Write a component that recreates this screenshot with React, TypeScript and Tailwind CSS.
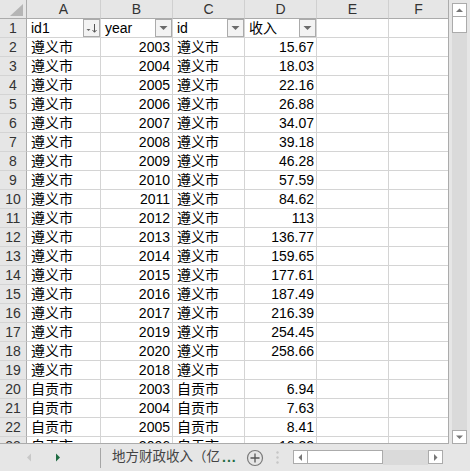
import React from "react";

const FONT = { fontFamily: '"Liberation Sans", "Noto Sans CJK SC", sans-serif' };

type Row = [string, string, string, string];

const ROWS: Row[] = [
  ["遵义市", "2003", "遵义市", "15.67"],
  ["遵义市", "2004", "遵义市", "18.03"],
  ["遵义市", "2005", "遵义市", "22.16"],
  ["遵义市", "2006", "遵义市", "26.88"],
  ["遵义市", "2007", "遵义市", "34.07"],
  ["遵义市", "2008", "遵义市", "39.18"],
  ["遵义市", "2009", "遵义市", "46.28"],
  ["遵义市", "2010", "遵义市", "57.59"],
  ["遵义市", "2011", "遵义市", "84.62"],
  ["遵义市", "2012", "遵义市", "113"],
  ["遵义市", "2013", "遵义市", "136.77"],
  ["遵义市", "2014", "遵义市", "159.65"],
  ["遵义市", "2015", "遵义市", "177.61"],
  ["遵义市", "2016", "遵义市", "187.49"],
  ["遵义市", "2017", "遵义市", "216.39"],
  ["遵义市", "2019", "遵义市", "254.45"],
  ["遵义市", "2020", "遵义市", "258.66"],
  ["遵义市", "2018", "遵义市", ""],
  ["自贡市", "2003", "自贡市", "6.94"],
  ["自贡市", "2004", "自贡市", "7.63"],
  ["自贡市", "2005", "自贡市", "8.41"],
  ["自贡市", "2006", "自贡市", "10.32"],
];

const COLS = ["A", "B", "C", "D", "E", "F"];
const HEADERS = ["id1", "year", "id", "收入"];

function FilterButton({ sorted }: { sorted?: boolean }) {
  return (
    <div className="absolute right-0 top-0 flex h-[18px] w-[17px] items-center justify-center border border-[#ababab] bg-[#f3f3f3]">
      {sorted ? (
        <svg width="13" height="12" viewBox="0 0 13 12">
          <path d="M1.5 7 L5.5 7 L3.5 9 Z" fill="#666" />
          <path d="M9.5 2 V10" stroke="#555" strokeWidth="1" />
          <path d="M7.5 8 L9.5 10.3 L11.5 8" stroke="#555" strokeWidth="1" fill="none" />
        </svg>
      ) : (
        <svg width="9" height="6" viewBox="0 0 9 6">
          <path d="M0.5 1 L8.5 1 L4.5 5 Z" fill="#6a6a6a" />
        </svg>
      )}
    </div>
  );
}

function Cell({ children, right, last }: { children?: React.ReactNode; right?: boolean; last?: boolean }) {
  return (
    <div
      className={`relative flex h-[19px] items-end overflow-hidden whitespace-nowrap border-b border-[#d4d4d4] bg-white text-[14px] leading-[18px] text-black ${
        last ? "" : "border-r"
      } ${right ? "justify-end pr-[2px]" : "justify-start pl-[4px]"}`}
    >
      {children}
    </div>
  );
}

function RowHead({ n }: { n: number }) {
  return (
    <div className="flex h-[19px] items-center justify-center border-b border-r border-b-[#d4d4d4] border-r-[#ababab] bg-[#e6e6e6] text-[14px] leading-[18px] text-[#333]">
      {n}
    </div>
  );
}

function ScrollBtn({ dir }: { dir: "up" | "down" | "left" | "right" }) {
  const paths: Record<string, string> = {
    up: "M1 5 L4.5 1.5 L8 5 Z",
    down: "M1 1.5 L4.5 5 L8 1.5 Z",
    left: "M5 1 L1.5 4.5 L5 8 Z",
    right: "M2 1 L5.5 4.5 L2 8 Z",
  };
  const horiz = dir === "left" || dir === "right";
  return (
    <div className="flex h-[14px] w-[15px] items-center justify-center border border-[#ababab] bg-white">
      <svg width={horiz ? 7 : 9} height={horiz ? 9 : 7} viewBox={horiz ? "0 0 7 9" : "0 0 9 7"}>
        <path d={paths[dir]} fill="#777" />
      </svg>
    </div>
  );
}

export default function App() {
  return (
    <div className="h-[471px] w-[470px] overflow-hidden bg-[#e6e6e6]" style={FONT}>
      <div className="flex h-[444px]">
        {/* sheet grid */}
        <div className="h-[444px] w-[449px] overflow-hidden border-b border-r border-[#ababab] bg-white">
          <div className="grid grid-cols-[27px_74px_72px_72px_72px_72px_1fr] border-[#d4d4d4]">
            {/* corner */}
            <div className="relative h-[19px] border-b border-r border-[#ababab] bg-[#e6e6e6]">
              <svg className="absolute bottom-[2px] right-[3px]" width="13" height="12" viewBox="0 0 13 12">
                <path d="M13 0 L13 12 L0 12 Z" fill="#b5b5b5" />
              </svg>
            </div>
            {COLS.map((c, i) => (
              <div
                key={c}
                className={`flex h-[19px] items-center justify-center border-b border-b-[#ababab] bg-[#e6e6e6] text-[14px] leading-[18px] text-[#333] ${
                  i < COLS.length - 1 ? "border-r border-r-[#d0d0d0]" : ""
                }`}
              >
                {c}
              </div>
            ))}

            {/* header row */}
            <RowHead n={1} />
            {HEADERS.map((h, i) => (
              <Cell key={h}>
                {h}
                <FilterButton sorted={i === 0} />
              </Cell>
            ))}
            <Cell />
            <Cell last />

            {ROWS.map((r, i) => (
              <React.Fragment key={i}>
                <RowHead n={i + 2} />
                <Cell>{r[0]}</Cell>
                <Cell right>{r[1]}</Cell>
                <Cell>{r[2]}</Cell>
                <Cell right>{r[3]}</Cell>
                <Cell />
                <Cell last />
              </React.Fragment>
            ))}
          </div>
        </div>

        {/* vertical scrollbar */}
        <div className="flex w-[21px] flex-col pl-[3px] pr-[3px] pt-[3px]">
          <ScrollBtn dir="up" />
          <div className="h-[16px] w-[15px] border border-t-0 border-[#ababab] bg-white" />
          <div className="flex-1 bg-[#dadada]" />
          <ScrollBtn dir="down" />
        </div>
      </div>

      {/* sheet tabs bar */}
      <div className="flex h-[27px] items-center">
        <div className="flex w-[100px] items-center">
          <svg className="ml-[26px]" width="6" height="9" viewBox="0 0 6 9">
            <path d="M5 0.5 L1 4.5 L5 8.5 Z" fill="#c8c8c8" />
          </svg>
          <svg className="ml-[23px]" width="6" height="9" viewBox="0 0 6 9">
            <path d="M1 0.5 L5 4.5 L1 8.5 Z" fill="#1e6b41" />
          </svg>
        </div>
        <div className="h-[20px] w-px bg-[#a6a6a6]" />
        <div className="ml-[11px] flex items-center whitespace-nowrap text-[13.5px] text-[#444]">
          地方财政收入（亿
          <span className="ml-[2px] text-[14px] font-bold tracking-[1px] text-[#1e6b41]">...</span>
        </div>
        <svg className="ml-[9px]" width="18" height="18" viewBox="0 0 18 18">
          <circle cx="9" cy="9" r="7.5" fill="none" stroke="#7a7a7a" strokeWidth="1.2" />
          <path d="M9 4.5 V13.5 M4.5 9 H13.5" stroke="#555" strokeWidth="1.3" />
        </svg>
        <svg className="ml-[12px]" width="3" height="13" viewBox="0 0 3 13">
          <circle cx="1.5" cy="1.5" r="1.2" fill="#c6c6c6" />
          <circle cx="1.5" cy="6.5" r="1.2" fill="#c6c6c6" />
          <circle cx="1.5" cy="11.5" r="1.2" fill="#c6c6c6" />
        </svg>
        {/* horizontal scrollbar */}
        <div className="ml-[14px] flex h-[15px] w-[150px] items-stretch">
          <ScrollBtn dir="left" />
          <div className="h-[14px] w-[75px] border border-l-0 border-[#ababab] bg-white" />
          <div className="flex-1 bg-[#dadada]" />
          <ScrollBtn dir="right" />
        </div>
      </div>
    </div>
  );
}
